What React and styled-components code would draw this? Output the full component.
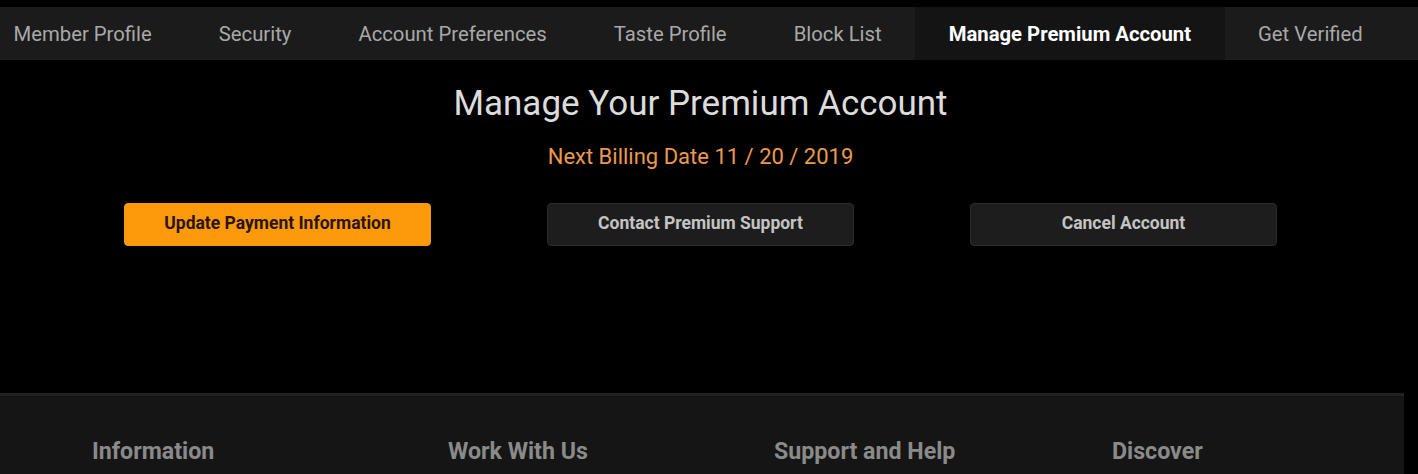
import React from "react";
import styled, { createGlobalStyle } from "styled-components";

const Global = createGlobalStyle`
  html, body { margin: 0; padding: 0; background: #000; }
  body { font-family: Roboto, "Liberation Sans", sans-serif; overflow: hidden; }
  * { box-sizing: border-box; }
`;

const Page = styled.div`
  width: 1404px;
  height: 474px;
  display: flex;
  flex-direction: column;
  background: #000;
`;

const NavBar = styled.nav`
  margin-top: 7px;
  width: 1418px;
  height: 53px;
  background: #1b1b1b;
  display: flex;
  overflow: hidden;
`;

const TabStrip = styled.div`
  display: flex;
  margin-left: -20px;
`;

const Tab = styled.a`
  display: flex;
  align-items: center;
  padding: 0 33.5px;
  height: ${(p) => (p.$active ? "54px" : "53px")};
  font-size: 20.3px;
  white-space: nowrap;
  color: ${(p) => (p.$active ? "#ffffff" : "#a9a9a9")};
  font-weight: ${(p) => (p.$active ? 700 : 400)};
  background: ${(p) => (p.$active ? "#141414" : "transparent")};
  cursor: pointer;
`;

const Main = styled.section`
  width: 1401px;
  display: flex;
  flex-direction: column;
  align-items: center;
  padding-top: 21px;
  height: 333px;
`;

const Title = styled.h1`
  margin: 0;
  font-size: 35px;
  font-weight: 400;
  color: #dcdcdc;
  line-height: 46px;
`;

const Billing = styled.p`
  margin: 15px 0 0;
  font-size: 22px;
  color: #eb9a4a;
  line-height: 30px;
`;

const ButtonRow = styled.div`
  display: flex;
  gap: 116px;
  margin-top: 31px;
`;

const Button = styled.button`
  width: 307px;
  height: 43px;
  padding: 0 0 3px;
  border-radius: 4px;
  font-family: Roboto, "Liberation Sans", sans-serif;
  font-size: 17.5px;
  font-weight: 700;
  cursor: pointer;
  border: 1px solid ${(p) => (p.$primary ? "#f79a10" : "#2b2b2b")};
  background: ${(p) => (p.$primary ? "#fd9a0c" : "#1d1d1d")};
  color: ${(p) => (p.$primary ? "#2a1408" : "#c4c4c4")};
`;

const Footer = styled.footer`
  flex: 1;
  background: #151515;
  border-top: 3px solid #222;
  display: grid;
  grid-template-columns: 356px 326px 338px 1fr;
  padding: 40px 0 0 92px;
`;

const FooterHeading = styled.h3`
  margin: 0;
  font-size: 23.2px;
  font-weight: 700;
  color: #8a8a8a;
  line-height: 30px;
`;

const tabs = [
  "Member Profile",
  "Security",
  "Account Preferences",
  "Taste Profile",
  "Block List",
  "Manage Premium Account",
  "Get Verified",
];

export default function App() {
  return (
    <>
      <Global />
      <Page>
        <NavBar>
          <TabStrip>
            {tabs.map((t) => (
              <Tab key={t} $active={t === "Manage Premium Account"}>
                {t}
              </Tab>
            ))}
          </TabStrip>
        </NavBar>
        <Main>
          <Title>Manage Your Premium Account</Title>
          <Billing>Next Billing Date 11 / 20 / 2019</Billing>
          <ButtonRow>
            <Button $primary>Update Payment Information</Button>
            <Button>Contact Premium Support</Button>
            <Button>Cancel Account</Button>
          </ButtonRow>
        </Main>
        <Footer>
          <FooterHeading>Information</FooterHeading>
          <FooterHeading>Work With Us</FooterHeading>
          <FooterHeading>Support and Help</FooterHeading>
          <FooterHeading>Discover</FooterHeading>
        </Footer>
      </Page>
    </>
  );
}
